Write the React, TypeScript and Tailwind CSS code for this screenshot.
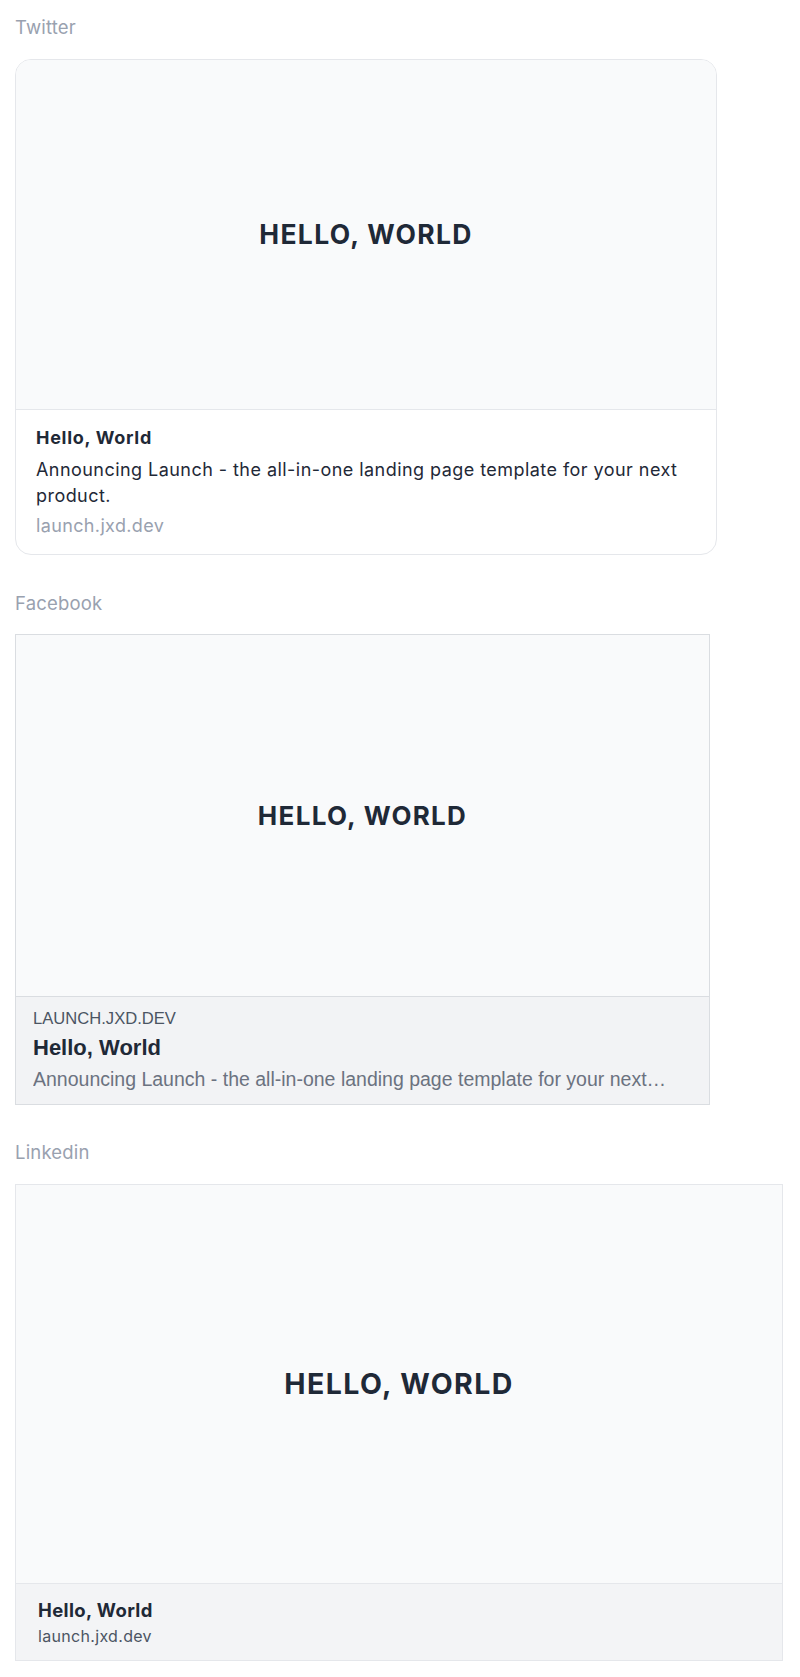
import React from 'react'

const title = 'Hello, World'
const description = 'Announcing Launch - the all-in-one landing page template for your next product.'
const domain = 'launch.jxd.dev'

const Label = ({ children }: { children: React.ReactNode }) => (
  <div className="font-['Inter',sans-serif] text-[18.5px] leading-[26px] text-gray-400 tracking-[0.01em]">{children}</div>
)

const Preview = ({ size }: { size: string }) => (
  <span className={`font-['Inter',sans-serif] font-bold text-[#1f2937] ${size}`}>HELLO, WORLD</span>
)

const App = () => {
  return (
    <div className="min-h-screen bg-white px-[15px] pt-[14px] pb-[17px] flex flex-col">
      <section>
        <Label>Twitter</Label>
        <div className="mt-[19px] w-[702px] rounded-2xl border border-gray-200 overflow-hidden">
          <div className="h-[350px] bg-gray-50 border-b border-gray-200 flex items-center justify-center">
            <Preview size="text-[26.5px] tracking-[0.05em]" />
          </div>
          <div className="px-5 pt-[15px] pb-[15px] font-['Inter',sans-serif] flex flex-col">
            <div className="text-[18px] leading-[26px] font-bold text-[#1f2937] tracking-[0.04em]">{title}</div>
            <p className="mt-[6px] text-[18px] leading-[26px] text-[#1f2937] tracking-[0.025em]">{description}</p>
            <div className="mt-[4px] text-[18px] leading-[26px] text-gray-400 tracking-[0.02em]">{domain}</div>
          </div>
        </div>
      </section>

      <section className="mt-[35px]">
        <Label>Facebook</Label>
        <div className="mt-[18px] w-[695px] border border-[#dadde1]">
          <div className="h-[362px] bg-gray-50 border-b border-[#dadde1] flex items-center justify-center">
            <Preview size="text-[26px] tracking-[0.05em]" />
          </div>
          <div className="bg-[#f2f3f5] px-[17px] pt-[12px] pb-[13px] font-['Liberation_Sans',Arial,sans-serif] flex flex-col">
            <div className="text-[16.6px] leading-[20px] uppercase text-[#4b5563]">{domain}</div>
            <div className="mt-[5px] text-[22px] leading-[28px] font-bold text-[#1f2937]">{title}</div>
            <p className="mt-[5px] text-[19.5px] leading-[24px] text-[#6b7280] line-clamp-1">{description}</p>
          </div>
        </div>
      </section>

      <section className="mt-[34px]">
        <Label>Linkedin</Label>
        <div className="mt-[19px] w-[768px] border border-gray-200">
          <div className="h-[399px] bg-gray-50 border-b border-gray-200 flex items-center justify-center">
            <Preview size="text-[28.5px] tracking-[0.05em]" />
          </div>
          <div className="bg-[#f3f4f6] px-[22px] pt-[14px] pb-[13px] font-['Inter',sans-serif] flex flex-col">
            <div className="text-[18.5px] leading-[24px] font-bold text-[#1f2937] tracking-[0.02em]">{title}</div>
            <div className="mt-[3px] text-[16px] leading-[22px] text-[#4b5563] tracking-[0.02em]">{domain}</div>
          </div>
        </div>
      </section>
    </div>
  )
}

export default App
